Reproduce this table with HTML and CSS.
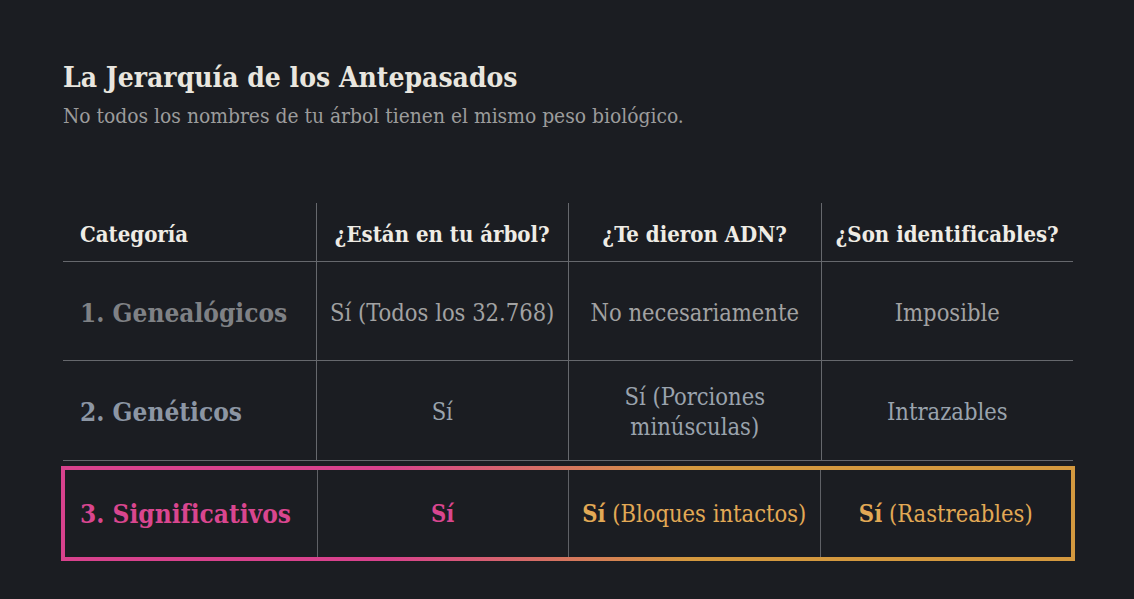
FILE: index.html
```html
<!DOCTYPE html>
<html lang="es">
<head>
<meta charset="utf-8">
<title>La Jerarquía de los Antepasados</title>
<link rel="stylesheet" href="styles.css">
</head>
<body>
<main class="page">
  <header class="intro">
    <h1 class="title">La Jerarquía de los Antepasados</h1>
    <p class="subtitle">No todos los nombres de tu árbol tienen el mismo peso biológico.</p>
  </header>
  <section class="table">
    <div class="row head">
      <div class="cell cat"><span>Categoría</span></div>
      <div class="cell"><span>¿Están en tu árbol?</span></div>
      <div class="cell"><span>¿Te dieron ADN?</span></div>
      <div class="cell"><span>¿Son identificables?</span></div>
    </div>
    <div class="row r1">
      <div class="cell cat"><span>1. Genealógicos</span></div>
      <div class="cell"><span>Sí (Todos los 32.768)</span></div>
      <div class="cell"><span>No necesariamente</span></div>
      <div class="cell"><span>Imposible</span></div>
    </div>
    <div class="row r2">
      <div class="cell cat"><span>2. Genéticos</span></div>
      <div class="cell"><span>Sí</span></div>
      <div class="cell"><span>Sí (Porciones<br>minúsculas)</span></div>
      <div class="cell"><span>Intrazables</span></div>
    </div>
    <div class="row r3">
      <div class="cell cat pink"><span>3. Significativos</span></div>
      <div class="cell pink"><span><b>Sí</b></span></div>
      <div class="cell gold"><span><b>Sí</b> (Bloques intactos)</span></div>
      <div class="cell gold"><span><b>Sí</b> (Rastreables)</span></div>
    </div>
  </section>
</main>
</body>
</html>
```
FILE: styles.css
```css
* { box-sizing: border-box; }
html, body { margin: 0; padding: 0; }
body {
  background: #1b1d22;
  width: 1134px;
  height: 599px;
  overflow: hidden;
  font-family: "DejaVu Serif Condensed", "DejaVu Serif", serif;
}
.page {
  padding: 61px 61px 0 63px;
}
.intro { margin: 0; }
.title {
  margin: 0;
  font-size: 28px;
  font-weight: 700;
  line-height: 34px;
  color: #e9e6df;
}
.subtitle {
  margin: 8px 0 0 0;
  font-size: 20.8px;
  line-height: 26px;
  color: #9c9c9c;
}
.table {
  margin-top: 74px;
  width: 1010px;
}
.row {
  display: grid;
  grid-template-columns: repeat(4, 1fr);
  border-bottom: 1px solid #66686d;
}
.cell {
  display: flex;
  align-items: center;
  justify-content: center;
  text-align: center;
  border-left: 1px solid #66686d;
  font-size: 23.5px;
  line-height: 30px;
  padding-top: 3px;
}
.cell.cat {
  border-left: none;
  justify-content: flex-start;
  text-align: left;
  padding-left: 17px;
  font-weight: 700;
  font-size: 26px;
}
.head { height: 59px; }
.head .cell {
  font-weight: 700;
  font-size: 22px;
  color: #efece5;
}
.head .cell.cat { font-size: 22px; }
.r1 { height: 99px; }
.r1 .cell { color: #a2a2a2; }
.r1 .cell.cat { color: #7f8185; }
.r2 { height: 100px; }
.r2 .cell { color: #9aa3ad; }
.r2 .cell.cat { color: #8c96a4; }
.r3 {
  margin: 5px -2px 0 -2px;
  height: 95px;
  border: 4px solid;
  border-image: linear-gradient(90deg, #d8428d 0%, #d8428d 32%, #d4993f 62%, #d4993f 100%) 1;
}
.r3 .cell { border-left-color: #5f6166; padding-top: 0; }
.r3 .cell.cat { padding-left: 15px; }
.pink { color: #d9468f; font-weight: 700; }
.gold { color: #e2a955; }
.gold b { font-weight: 700; }
```
